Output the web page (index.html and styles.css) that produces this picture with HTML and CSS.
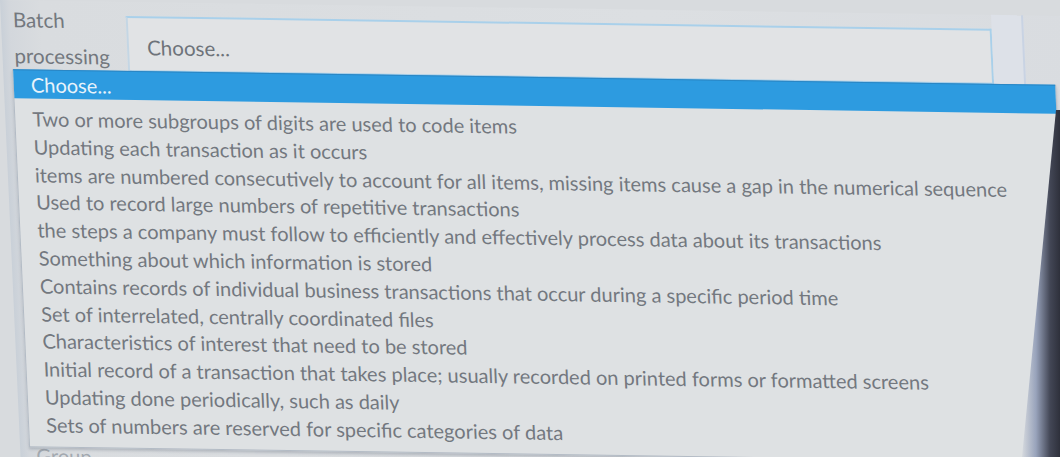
FILE: index.html
```html
<!DOCTYPE html>
<html lang="en">
<head>
<meta charset="utf-8">
<title>Batch processing</title>
<link rel="stylesheet" href="styles.css">
</head>
<body>
<div class="screen">
  <div class="field">
    <div class="label">Batch<br>processing</div>
    <div class="select"><span>Choose...</span></div>
    <div class="select-end"></div>
  </div>
  <div class="next-row">Group</div>

  <div class="menu">
    <div class="opt selected">Choose...</div>
    <ul class="options">
      <li>Two or more subgroups of digits are used to code items</li>
      <li>Updating each transaction as it occurs</li>
      <li>items are numbered consecutively to account for all items, missing items cause a gap in the numerical sequence</li>
      <li>Used to record large numbers of repetitive transactions</li>
      <li>the steps a company must follow to efficiently and effectively process data about its transactions</li>
      <li>Something about which information is stored</li>
      <li>Contains records of individual business transactions that occur during a specific period time</li>
      <li>Set of interrelated, centrally coordinated files</li>
      <li>Characteristics of interest that need to be stored</li>
      <li>Initial record of a transaction that takes place; usually recorded on printed forms or formatted screens</li>
      <li>Updating done periodically, such as daily</li>
      <li>Sets of numbers are reserved for specific categories of data</li>
    </ul>
  </div>
</div>
<div class="bezel"></div>
</body>
</html>
```

FILE: styles.css
```css
html, body {
  margin: 0;
  padding: 0;
}
body {
  width: 1060px;
  height: 457px;
  overflow: hidden;
  background: #d8dbde;
  font-family: Lato, "Open Sans", sans-serif;
  position: relative;
}
.screen {
  position: relative;
  width: 1080px;
  height: 470px;
  transform-origin: 0 0;
  transform: matrix(1, 0.015, 0.045, 1, 0, 0);
  background: linear-gradient(to right, #c9d0d8 0, #d3d7dc 9px, #d9dcdf 40px, #dcdfe2 60%, #d9dce0 100%);
}
.field {
  display: flex;
  align-items: flex-start;
  padding-left: 12px;
  height: 76px;
}
.label {
  width: 113px;
  padding-top: 1px;
  font-size: 20.5px;
  line-height: 36px;
  color: #73787e;
}
.select {
  margin-top: 14px;
  width: 866px;
  height: 56px;
  border: 2px solid #a9d0ea;
  border-left-color: #c4d6e4;
  background: #e1e3e5;
  display: flex;
  align-items: center;
  padding-left: 18px;
  padding-top: 5px;
  box-sizing: border-box;
  font-size: 20.5px;
  color: #6e737a;
}
.select-end {
  width: 32px;
  height: 70px;
  background: #dde1e8;
  border-right: 2px solid #c9d3e3;
  box-sizing: border-box;
}
.next-row {
  padding-left: 16px;
  margin-top: 367px;
  font-size: 20px;
  color: #a3a9b0;
}
.menu {
  position: absolute;
  left: 9px;
  top: 69px;
  width: 1044px;
  height: 378px;
  background: #dee1e3;
  border: 1px solid #b3bbc5;
  border-top: none;
  box-sizing: border-box;
  box-shadow: 0 2px 3px rgba(60, 70, 90, 0.25);
}
.opt.selected {
  height: 29px;
  line-height: 28px;
  padding-left: 17px;
  background: #2d9be0;
  color: #e8f3fb;
  font-size: 20px;
  border-top: 1px solid #2a86c4;
  box-sizing: border-box;
}
.options {
  list-style: none;
  margin: 0;
  padding: 7px 0 0 0;
}
.options li {
  padding-left: 17px;
  height: 27.8px;
  line-height: 27.8px;
  font-size: 20px;
  color: #73787f;
  white-space: nowrap;
}
.bezel {
  position: absolute;
  right: 0;
  top: 0;
  width: 40px;
  height: 457px;
  background: linear-gradient(to right, rgba(150, 160, 185, 0) 0, rgba(140, 152, 180, 0.85) 40%, #434756 75%, #2e303b 100%);
  clip-path: polygon(36px 110px, 40px 110px, 40px 457px, 2px 457px);
}
```
